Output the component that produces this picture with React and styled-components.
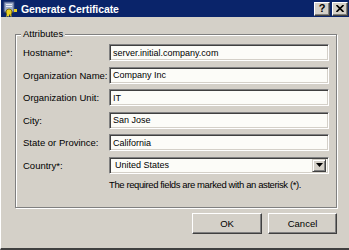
import React from "react";
import styled, { createGlobalStyle } from "styled-components";

const Global = createGlobalStyle`
  html, body { margin: 0; padding: 0; background: #d4d0c8; }
  * { box-sizing: border-box; }
`;

const Win = styled.div`
  width: 349px;
  height: 250px;
  background: #d4d0c8;
  border-left: 1px solid #ffffff;
  border-bottom: 2px solid #404040;
  display: flex;
  flex-direction: column;
  font-family: "Liberation Sans", Arial, sans-serif;
  font-size: 9.5px;
  color: #000;
  overflow: hidden;
`;

const TitleBar = styled.div`
  height: 17px;
  background: #0a246a;
  display: flex;
  align-items: center;
  padding: 0 1px;
  gap: 3px;
`;

const Title = styled.div`
  flex: 1;
  color: #fff;
  font-weight: bold;
  font-size: 10.5px;
  letter-spacing: -0.1px;
`;

const CapBtn = styled.div`
  width: 16px;
  height: 14px;
  background: #d4d0c8;
  border-top: 1px solid #fff;
  border-left: 1px solid #fff;
  border-right: 1px solid #404040;
  border-bottom: 1px solid #404040;
  box-shadow: inset -1px -1px 0 #808080;
  display: flex;
  align-items: center;
  justify-content: center;
  font-weight: bold;
  font-size: 11px;
  line-height: 1;
  margin-left: ${({ gap }) => gap || 0}px;
`;

const Body = styled.div`
  flex: 1;
  padding: 17px 12px 0 14px;
  display: flex;
  flex-direction: column;
`;

const Group = styled.div`
  position: relative;
  height: 174px;
  border: 1px solid #808080;
  box-shadow: inset 1px 1px 0 #fff, 1px 1px 0 #fff;
  padding: 9px 7px 0 7px;
`;

const Legend = styled.span`
  position: absolute;
  top: -7px;
  left: 5px;
  padding: 0 2px;
  background: #d4d0c8;
`;

const Form = styled.div`
  display: grid;
  grid-template-columns: 86px 220px;
  grid-template-rows: repeat(6, 17px) auto;
  row-gap: 5.6px;
  align-items: center;
`;

const Label = styled.label`
  white-space: nowrap;
`;

const Field = styled.div`
  height: 17px;
  background: #fcfcf8;
  border-top: 1px solid #808080;
  border-left: 1px solid #808080;
  border-right: 1px solid #fff;
  border-bottom: 1px solid #fff;
  box-shadow: inset 1px 1px 0 #404040, inset -1px -1px 0 #d4d0c8;
  display: flex;
  align-items: center;
  padding-left: 3px;
  font-size: 9px;
  white-space: nowrap;
  overflow: hidden;
`;

const Select = styled(Field)`
  padding-left: 5px;
  padding-right: 2px;
  justify-content: space-between;
`;

const Arrow = styled.div`
  width: 14px;
  height: 13px;
  background: #d4d0c8;
  border-top: 1px solid #d4d0c8;
  border-left: 1px solid #d4d0c8;
  border-right: 1px solid #404040;
  border-bottom: 1px solid #404040;
  box-shadow: inset 1px 1px 0 #fff, inset -1px -1px 0 #808080;
  display: flex;
  align-items: center;
  justify-content: center;
`;

const Note = styled.div`
  grid-column: 2;
  align-self: start;
  margin-top: -1px;
  letter-spacing: -0.4px;
  white-space: nowrap;
`;

const Buttons = styled.div`
  display: flex;
  justify-content: flex-end;
  gap: 6px;
  margin-top: 5px;
`;

const Button = styled.button`
  width: ${({ w }) => w}px;
  height: 21px;
  background: #d4d0c8;
  font: inherit;
  color: #000;
  border-top: 1px solid #fff;
  border-left: 1px solid #fff;
  border-right: 1px solid #404040;
  border-bottom: 1px solid #404040;
  box-shadow: inset -1px -1px 0 #808080;
  padding: 0;
`;

const CertIcon = () => (
  <svg width="16" height="16" viewBox="0 0 16 16">
    <rect x="2" y="1" width="10" height="10" fill="#9aa8c8" stroke="#3a4a7a" strokeWidth="1" />
    <rect x="4" y="3" width="6" height="1" fill="#e8ecf4" />
    <rect x="4" y="5" width="6" height="1" fill="#e8ecf4" />
    <circle cx="7" cy="11" r="3" fill="#e8d020" stroke="#807010" strokeWidth="1" />
    <path d="M5 13 L4 16 L6 15 L7 16 L7 13 Z" fill="#e8d020" />
    <path d="M9 13 L10 16 L8.5 15 L8 16 L8 13 Z" fill="#c8b018" />
    <rect x="12" y="8" width="3" height="3" fill="#e8d020" />
  </svg>
);

const CloseGlyph = () => (
  <svg width="8" height="7" viewBox="0 0 8 7">
    <path d="M0.5 0 L7.5 7 M7.5 0 L0.5 7" stroke="#000" strokeWidth="1.6" />
  </svg>
);

const fields = [
  ["Hostname*:", "server.initial.company.com"],
  ["Organization Name:", "Company Inc"],
  ["Organization Unit:", "IT"],
  ["City:", "San Jose"],
  ["State or Province:", "California"],
];

export default function App() {
  return (
    <>
      <Global />
      <Win>
        <TitleBar>
          <CertIcon />
          <Title>Generate Certificate</Title>
          <CapBtn>?</CapBtn>
          <CapBtn gap={-1}>
            <CloseGlyph />
          </CapBtn>
        </TitleBar>
        <Body>
          <Group>
            <Legend>Attributes</Legend>
            <Form>
              {fields.map(([l, v]) => (
                <React.Fragment key={l}>
                  <Label>{l}</Label>
                  <Field>{v}</Field>
                </React.Fragment>
              ))}
              <Label>Country*:</Label>
              <Select>
                <span>United States</span>
                <Arrow>
                  <svg width="7" height="4" viewBox="0 0 7 4">
                    <path d="M0 0 H7 L3.5 4 Z" fill="#000" />
                  </svg>
                </Arrow>
              </Select>
              <Note>The required fields are marked with an asterisk (*).</Note>
            </Form>
          </Group>
          <Buttons>
            <Button w={70}>OK</Button>
            <Button w={69}>Cancel</Button>
          </Buttons>
        </Body>
      </Win>
    </>
  );
}
